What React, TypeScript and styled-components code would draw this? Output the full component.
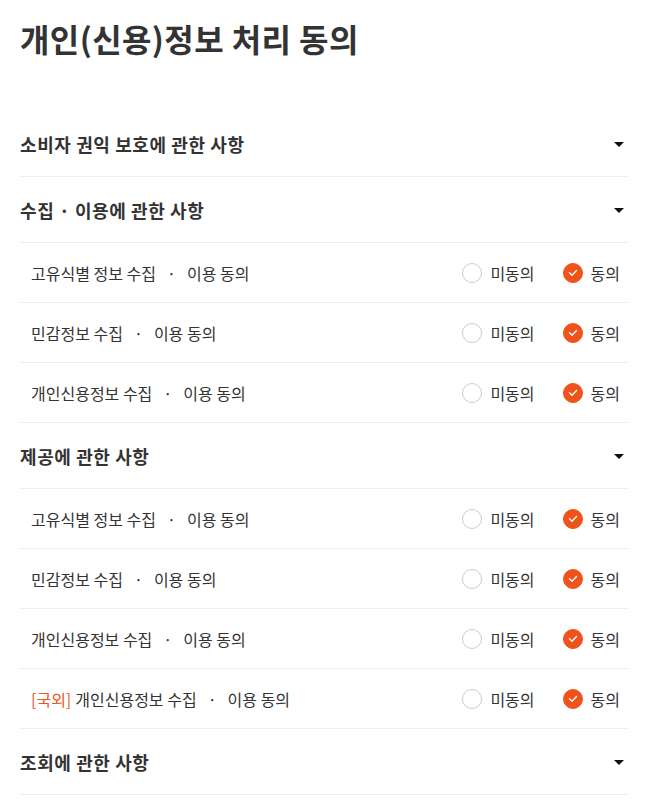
import React, { FC } from "react";
import styled, { createGlobalStyle } from "styled-components";

const GlobalStyle = createGlobalStyle`
    body {
        margin: 0;
        background: #fff;
        font-family: "Noto Sans CJK KR", "Noto Sans", sans-serif;
        color: #333;
    }
`;

const Page = styled.div`
    width: 608px;
    padding: 0 40px 0 20px;
`;

const Title = styled.h1`
    margin: 0;
    padding-top: 18px;
    height: 111px;
    box-sizing: border-box;
    font-size: 32px;
    line-height: 40px;
    font-weight: 700;
    color: #333;
    letter-spacing: 0.4px;
`;

const SectionHead = styled.div`
    display: flex;
    align-items: center;
    justify-content: space-between;
    height: 66px;
    border-bottom: 1px solid #eee;
    box-sizing: border-box;
    padding-right: 4px;

    h2 {
        margin: 0;
        font-size: 18px;
        font-weight: 700;
        color: #333;
        letter-spacing: 0.6px;
    }
`;

const Caret = styled.span`
    width: 0;
    height: 0;
    border-left: 5px solid transparent;
    border-right: 5px solid transparent;
    border-top: 5px solid #111;
    margin-top: 2px;
`;

const Row = styled.div`
    display: flex;
    align-items: center;
    justify-content: space-between;
    height: 60px;
    border-bottom: 1px solid #eee;
    box-sizing: border-box;
    padding: 0 8px 0 11px;
    font-size: 16px;
    color: #333;

    .foreign {
        color: #e8562a;
        margin-right: 4px;
    }
`;

const Dot = styled.span`
    margin: 0 11px;
`;

const Choices = styled.div`
    display: flex;
    align-items: center;
    gap: 28px;
`;

const Choice = styled.label`
    display: flex;
    align-items: center;
    gap: 8px;
    font-size: 16px;
    color: #333;
`;

const Circle = styled.span<{ $on: boolean }>`
    width: 20px;
    height: 20px;
    border-radius: 50%;
    box-sizing: border-box;
    display: flex;
    align-items: center;
    justify-content: center;
    border: 1px solid ${(p) => (p.$on ? "#f0521c" : "#ccc")};
    background: ${(p) => (p.$on ? "#f0521c" : "#fff")};
`;

const Check: FC = () => (
    <svg width="10" height="8" viewBox="0 0 10 8">
        <path d="M1.5 3.8 L4 6.2 L8.5 1.6" fill="none" stroke="#fff" strokeWidth="1.4" strokeLinecap="round" strokeLinejoin="round" />
    </svg>
);

type Item = { what: string; foreign?: boolean };

const sections: { title: string; items: Item[] }[] = [
    { title: "소비자 권익 보호에 관한 사항", items: [] },
    {
        title: "수집 · 이용에 관한 사항",
        items: [
            { what: "고유식별 정보 수집" },
            { what: "민감정보 수집" },
            { what: "개인신용정보 수집" },
        ],
    },
    {
        title: "제공에 관한 사항",
        items: [
            { what: "고유식별 정보 수집" },
            { what: "민감정보 수집" },
            { what: "개인신용정보 수집" },
            { what: "개인신용정보 수집", foreign: true },
        ],
    },
    { title: "조회에 관한 사항", items: [] },
];

const App: FC = () => {
    return <Page>
        <GlobalStyle />
        <Title>개인(신용)정보 처리 동의</Title>
        {sections.map((s, i) => (
            <div key={i}>
                <SectionHead>
                    <h2>{s.title}</h2>
                    <Caret />
                </SectionHead>
                {s.items.map((it, j) => (
                    <Row key={j}>
                        <span>
                            {it.foreign && <span className="foreign">[국외]</span>}
                            {it.what}<Dot>·</Dot>이용 동의
                        </span>
                        <Choices>
                            <Choice>
                                <Circle $on={false} />
                                미동의
                            </Choice>
                            <Choice>
                                <Circle $on={true}><Check /></Circle>
                                동의
                            </Choice>
                        </Choices>
                    </Row>
                ))}
            </div>
        ))}
    </Page>;
};

export default App;
